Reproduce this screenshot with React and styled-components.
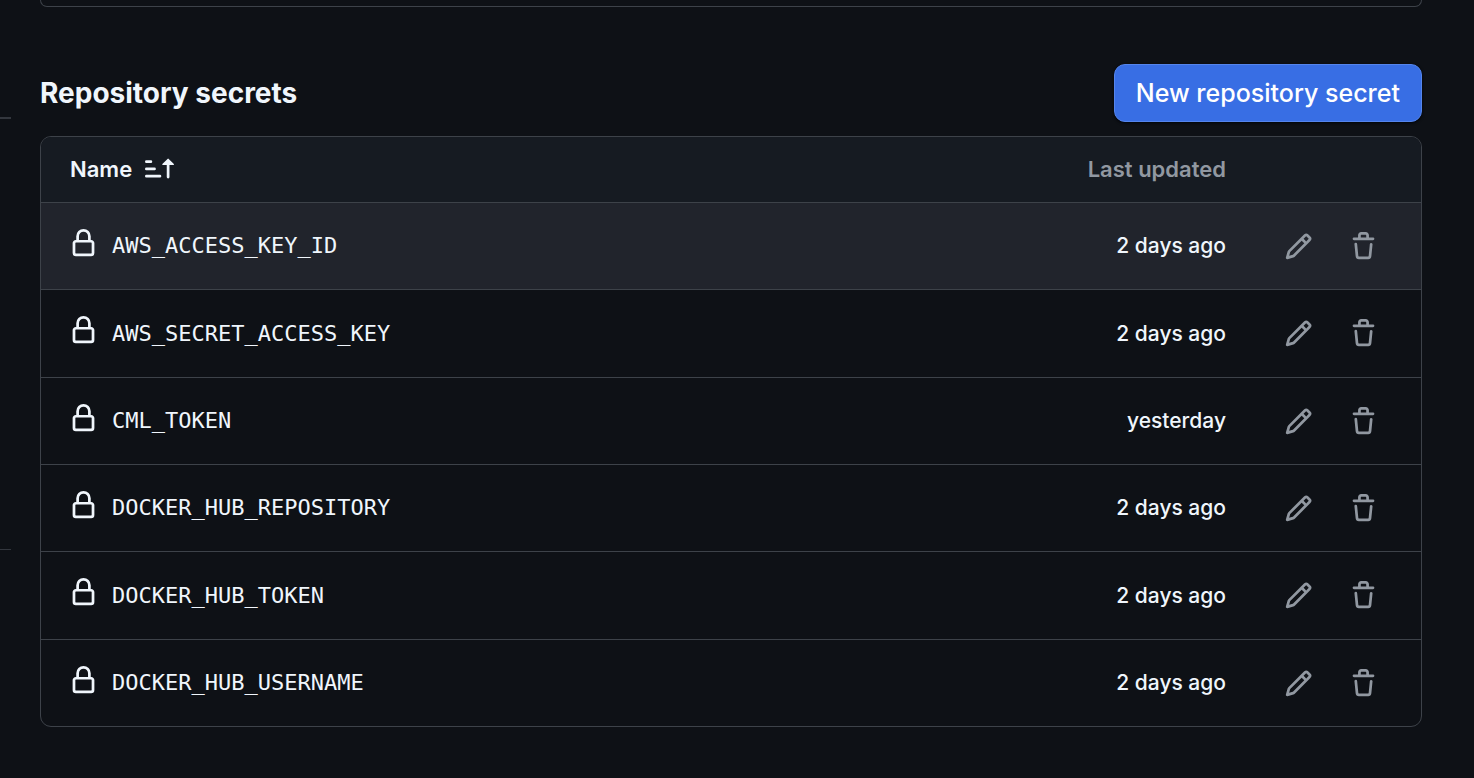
import React from "react";
import styled, { createGlobalStyle } from "styled-components";

const GlobalStyle = createGlobalStyle`
  *, *::before, *::after { box-sizing: border-box; }
  body {
    margin: 0;
    background: #0e1116;
    color: #f0f6fc;
    font-family: Inter, "Liberation Sans", sans-serif;
    font-size: 22px;
    line-height: 32px;
  }
`;

const Page = styled.div`
  display: flex;
  gap: 29px;
  min-height: 100vh;
  padding-right: 52px;
`;

const Sidebar = styled.aside`
  flex: none;
  width: 11px;
  padding-top: 117px;
`;

const Divider = styled.hr`
  margin: 0 0 430px;
  border: 0;
  border-top: ${(p) => (p.$thick ? "2px" : "1px")} solid #33373e;

  &:last-child { margin-bottom: 0; }
`;

const Main = styled.main`
  flex: 1;
  min-width: 0;
  padding-bottom: 48px;
`;

const PreviousPanel = styled.div`
  height: 7px;
  border: 1px solid #3d4249;
  border-top: 0;
  border-radius: 0 0 11px 11px;
`;

const SectionHeader = styled.header`
  display: flex;
  align-items: center;
  justify-content: space-between;
  margin: 57px 0 14px;
`;

const Title = styled.h2`
  margin: 0;
  font-size: 28px;
  font-weight: 700;
`;

const PrimaryButton = styled.button`
  height: 58px;
  padding: 0 21px;
  border: 1px solid #5585ec;
  border-radius: 11px;
  background: #386ee4;
  box-shadow: 0 1px 3px #010409;
  color: #fff;
  font: 500 25px/32px Inter, "Liberation Sans", sans-serif;
  cursor: pointer;
`;

const Panel = styled.div`
  overflow: hidden;
  border: 1px solid #3d4249;
  border-radius: 11px;
`;

const Table = styled.table`
  width: 100%;
  border-collapse: separate;
  border-spacing: 0;
`;

const HeadCell = styled.th`
  height: 66px;
  padding: ${(p) => (p.$end ? "0 0 2px" : "0 0 2px 29px")};
  border-bottom: 1px solid #3d4249;
  background: #161b22;
  color: ${(p) => (p.$muted ? "#9198a1" : "#f0f6fc")};
  font-weight: 600;
  text-align: ${(p) => (p.$end ? "right" : "left")};
`;

const SortButton = styled.button`
  display: flex;
  align-items: center;
  gap: 13px;
  padding: 0;
  border: 0;
  background: none;
  color: inherit;
  font: inherit;
  cursor: pointer;
`;

const Row = styled.tr`
  height: 87px;
  background: ${(p) => (p.$active ? "#21242c" : "transparent")};

  &:nth-child(3n + 2) { height: 88px; }
  &:last-child { height: 86px; }
  &:not(:last-child) > td { border-bottom: 1px solid #3d4249; }
`;

const Cell = styled.td`
  padding: 0;
  text-align: ${(p) => (p.$end ? "right" : "left")};
`;

const DateCell = styled(Cell)`
  font-size: 21px;
  font-weight: 500;
`;

const ActionsCell = styled(Cell)`
  width: 195px;
  padding: 0 29px 0 43px;
`;

const SecretName = styled.div`
  display: flex;
  align-items: center;
  gap: 14px;
  padding-left: 28px;

  svg { margin-bottom: 6px; }
`;

const Code = styled.code`
  font-family: "DejaVu Sans Mono", monospace;
  font-size: 22px;
`;

const Actions = styled.div`
  display: flex;
  gap: 7px;
`;

const IconButton = styled.button`
  display: flex;
  align-items: center;
  justify-content: center;
  width: 58px;
  height: 58px;
  padding: 0;
  border: 0;
  border-radius: 11px;
  background: none;
  color: #9198a1;
  cursor: pointer;
`;

const Svg = styled.svg`
  flex: none;
  display: block;
  width: 29px;
  height: 29px;
  fill: currentColor;
`;

const paths = {
  lock: "M4 4a4 4 0 0 1 8 0v2h.25c.966 0 1.75.784 1.75 1.75v5.5A1.75 1.75 0 0 1 12.25 15h-8.5A1.75 1.75 0 0 1 2 13.25v-5.5C2 6.784 2.784 6 3.75 6H4Zm8.25 3.5h-8.5a.25.25 0 0 0-.25.25v5.5c0 .138.112.25.25.25h8.5a.25.25 0 0 0 .25-.25v-5.5a.25.25 0 0 0-.25-.25ZM10.5 6V4a2.5 2.5 0 1 0-5 0v2Z",
  pencil: "M11.013 1.427a1.75 1.75 0 0 1 2.474 0l1.086 1.086a1.75 1.75 0 0 1 0 2.474l-8.61 8.61c-.21.21-.47.364-.756.445l-3.251.93a.75.75 0 0 1-.927-.928l.929-3.25c.081-.286.235-.547.445-.758l8.61-8.61Zm.176 4.823L9.75 4.81l-6.286 6.287a.253.253 0 0 0-.064.108l-.558 1.953 1.953-.558a.253.253 0 0 0 .108-.064Zm1.238-3.763a.25.25 0 0 0-.354 0L10.811 3.75l1.439 1.44 1.263-1.263a.25.25 0 0 0 0-.354Z",
  trash: "M11 1.75V3h2.25a.75.75 0 0 1 0 1.5H2.75a.75.75 0 0 1 0-1.5H5V1.75C5 .784 5.784 0 6.75 0h2.5C10.216 0 11 .784 11 1.75ZM4.496 6.675l.66 6.6a.25.25 0 0 0 .249.225h5.19a.25.25 0 0 0 .249-.225l.66-6.6a.75.75 0 0 1 1.492.149l-.66 6.6A1.748 1.748 0 0 1 10.595 15h-5.19a1.75 1.75 0 0 1-1.741-1.575l-.66-6.6a.75.75 0 1 1 1.492-.15ZM6.5 1.75V3h3V1.75a.25.25 0 0 0-.25-.25h-2.5a.25.25 0 0 0-.25.25Z",
  sort: "m12.927 2.573 3 3A.25.25 0 0 1 15.75 6H13.5v6.75a.75.75 0 0 1-1.5 0V6H9.75a.25.25 0 0 1-.177-.427l3-3a.25.25 0 0 1 .354 0ZM0 12.25a.75.75 0 0 1 .75-.75h7.5a.75.75 0 0 1 0 1.5H.75a.75.75 0 0 1-.75-.75Zm0-4a.75.75 0 0 1 .75-.75h4.5a.75.75 0 0 1 0 1.5H.75a.75.75 0 0 1-.75-.75Zm0-4a.75.75 0 0 1 .75-.75h2.5a.75.75 0 0 1 0 1.5H.75a.75.75 0 0 1-.75-.75Z",
};

const Icon = ({ name }) => (
  <Svg viewBox="0 0 16 16" aria-hidden="true">
    <path d={paths[name]} />
  </Svg>
);

const secrets = [
  { name: "AWS_ACCESS_KEY_ID", updated: "2 days ago", active: true },
  { name: "AWS_SECRET_ACCESS_KEY", updated: "2 days ago" },
  { name: "CML_TOKEN", updated: "yesterday" },
  { name: "DOCKER_HUB_REPOSITORY", updated: "2 days ago" },
  { name: "DOCKER_HUB_TOKEN", updated: "2 days ago" },
  { name: "DOCKER_HUB_USERNAME", updated: "2 days ago" },
];

export default function App() {
  return (
    <>
      <GlobalStyle />
      <Page>
        <Sidebar>
          <Divider $thick />
          <Divider />
        </Sidebar>
        <Main>
          <PreviousPanel />
          <SectionHeader>
            <Title id="secrets-title">Repository secrets</Title>
            <PrimaryButton type="button">New repository secret</PrimaryButton>
          </SectionHeader>
          <Panel>
            <Table aria-labelledby="secrets-title">
              <thead>
                <tr>
                  <HeadCell scope="col" aria-sort="ascending">
                    <SortButton type="button">
                      Name
                      <Icon name="sort" />
                    </SortButton>
                  </HeadCell>
                  <HeadCell scope="col" $end $muted>Last updated</HeadCell>
                  <HeadCell as="td" $end />
                </tr>
              </thead>
              <tbody>
                {secrets.map((s) => (
                  <Row key={s.name} $active={s.active}>
                    <Cell>
                      <SecretName>
                        <Icon name="lock" />
                        <Code>{s.name}</Code>
                      </SecretName>
                    </Cell>
                    <DateCell $end>{s.updated}</DateCell>
                    <ActionsCell>
                      <Actions>
                        <IconButton type="button" aria-label={`Edit ${s.name}`}>
                          <Icon name="pencil" />
                        </IconButton>
                        <IconButton type="button" aria-label={`Delete ${s.name}`}>
                          <Icon name="trash" />
                        </IconButton>
                      </Actions>
                    </ActionsCell>
                  </Row>
                ))}
              </tbody>
            </Table>
          </Panel>
        </Main>
      </Page>
    </>
  );
}
